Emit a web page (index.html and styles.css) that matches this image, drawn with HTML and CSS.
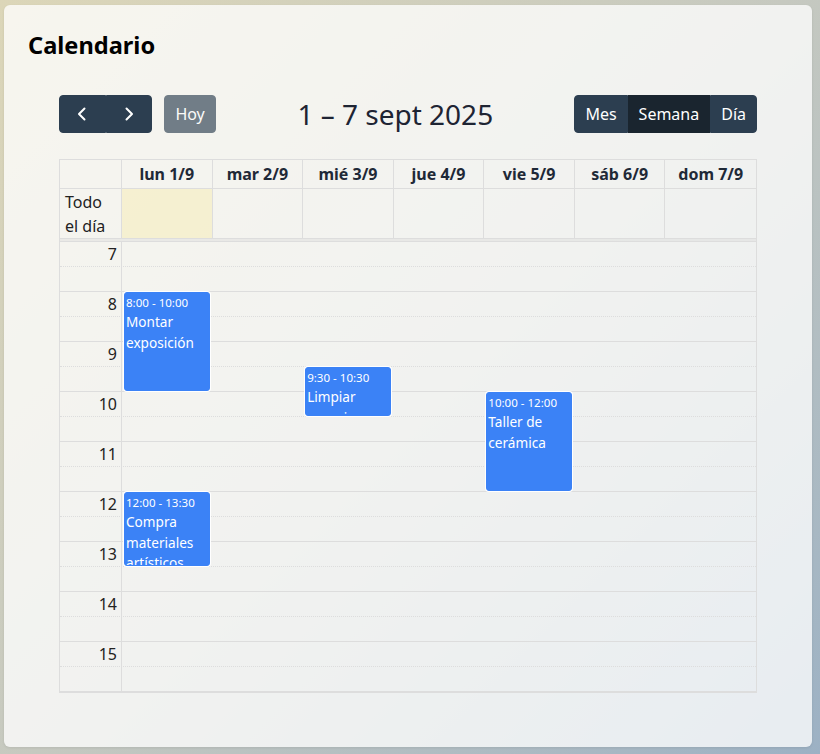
FILE: index.html
```html
<!DOCTYPE html>
<html lang="es">
<head>
<meta charset="utf-8">
<title>Calendario</title>
<link rel="stylesheet" href="styles.css">
</head>
<body>
<div class="card">
  <h2 class="page-title">Calendario</h2>
  <div class="cal">
    <div class="toolbar">
      <div class="chunk">
        <div class="btn-group">
          <button class="btn btn-icon" aria-label="Anterior"><svg width="16" height="16" viewBox="0 0 16 16"><path d="M10.5 2.5 L5 8 L10.5 13.5" fill="none" stroke="#fff" stroke-width="2" stroke-linecap="round" stroke-linejoin="round"/></svg></button>
          <button class="btn btn-icon" aria-label="Siguiente"><svg width="16" height="16" viewBox="0 0 16 16"><path d="M5.5 2.5 L11 8 L5.5 13.5" fill="none" stroke="#fff" stroke-width="2" stroke-linecap="round" stroke-linejoin="round"/></svg></button>
        </div>
        <button class="btn btn-disabled">Hoy</button>
      </div>
      <h2 class="cal-title">1 – 7 sept 2025</h2>
      <div class="btn-group">
        <button class="btn">Mes</button><button class="btn active">Semana</button><button class="btn">Día</button>
      </div>
    </div>

    <div class="grid">
      <div class="head">
        <div></div>
        <div>lun 1/9</div>
        <div>mar 2/9</div>
        <div>mié 3/9</div>
        <div>jue 4/9</div>
        <div>vie 5/9</div>
        <div>sáb 6/9</div>
        <div>dom 7/9</div>
      </div>
      <div class="allday">
        <div class="allday-label">Todo el día</div>
        <div class="today"></div>
        <div></div>
        <div></div>
        <div></div>
        <div></div>
        <div></div>
        <div></div>
      </div>
      <div class="divider"></div>
      <div class="body">
        <div class="slot"><div class="slot-label">7</div></div>
        <div class="slot half"><div class="slot-label"></div></div>
        <div class="slot"><div class="slot-label">8</div></div>
        <div class="slot half"><div class="slot-label"></div></div>
        <div class="slot"><div class="slot-label">9</div></div>
        <div class="slot half"><div class="slot-label"></div></div>
        <div class="slot"><div class="slot-label">10</div></div>
        <div class="slot half"><div class="slot-label"></div></div>
        <div class="slot"><div class="slot-label">11</div></div>
        <div class="slot half"><div class="slot-label"></div></div>
        <div class="slot"><div class="slot-label">12</div></div>
        <div class="slot half"><div class="slot-label"></div></div>
        <div class="slot"><div class="slot-label">13</div></div>
        <div class="slot half"><div class="slot-label"></div></div>
        <div class="slot"><div class="slot-label">14</div></div>
        <div class="slot half"><div class="slot-label"></div></div>
        <div class="slot"><div class="slot-label">15</div></div>
        <div class="slot half"><div class="slot-label"></div></div>

        <div class="cols">
          <div class="col axis"></div>
          <div class="col">
            <div class="event" style="top:50px;height:99px">
              <div class="ev-time">8:00 - 10:00</div>
              <div class="ev-title">Montar exposición</div>
            </div>
            <div class="event" style="top:250px;height:74px">
              <div class="ev-time">12:00 - 13:30</div>
              <div class="ev-title">Compra materiales artísticos</div>
            </div>
          </div>
          <div class="col"></div>
          <div class="col">
            <div class="event" style="top:125px;height:49px">
              <div class="ev-time">9:30 - 10:30</div>
              <div class="ev-title">Limpiar espacio</div>
            </div>
          </div>
          <div class="col"></div>
          <div class="col">
            <div class="event" style="top:150px;height:99px">
              <div class="ev-time">10:00 - 12:00</div>
              <div class="ev-title">Taller de cerámica</div>
            </div>
          </div>
          <div class="col"></div>
          <div class="col"></div>
        </div>
      </div>
    </div>
  </div>
</div>
</body>
</html>
```

FILE: styles.css
```css
* { box-sizing: border-box; }

html, body {
  margin: 0;
  height: 100%;
}

body {
  padding: 5px 8px 7px 4px;
  background: linear-gradient(135deg, #dcd6b8 0%, #c6c9c0 50%, #9cb1c4 100%);
  font-family: "Noto Sans", "Open Sans", sans-serif;
  font-size: 16px;
  line-height: 1.5;
  color: #222;
}

.card {
  height: 100%;
  padding: 24px;
  border-radius: 6px;
  background: rgba(255, 255, 255, 0.76);
  box-shadow: 0 1px 3px rgba(0, 0, 0, 0.08);
}

.page-title {
  margin: 0 0 34px;
  font-size: 23.6px;
  line-height: 32px;
  font-weight: 700;
  color: #000;
}

.cal {
  width: 698px;
  margin: 0 auto;
}

/* toolbar */
.toolbar {
  display: flex;
  justify-content: space-between;
  align-items: center;
  height: 38px;
  margin-bottom: 26px;
}

.chunk {
  display: flex;
  align-items: center;
}

.btn-group {
  display: flex;
}

.btn {
  font-family: inherit;
  font-size: 16px;
  line-height: 24px;
  height: 38px;
  padding: 6px 10px;
  border: 1px solid #2c3e50;
  background: #2c3e50;
  color: #fff;
  border-radius: 4px;
  cursor: pointer;
}

.btn-group .btn { border-radius: 0; }
.btn-group .btn:first-child { border-radius: 4px 0 0 4px; }
.btn-group .btn:last-child { border-radius: 0 4px 4px 0; }

.btn-icon {
  width: 46.5px;
  padding: 0;
  display: flex;
  align-items: center;
  justify-content: center;
}

.btn.active {
  background: #1a252f;
  border-color: #1a252f;
}

.btn-disabled {
  margin-left: 12px;
  padding: 6px 10.4px;
  opacity: 0.65;
}

.cal-title {
  margin: 0;
  font-size: 28px;
  line-height: 38px;
  font-weight: 400;
  color: #1e2433;
}

/* grid */
.grid {
  border: 1px solid #ddd;
}

.head,
.allday {
  display: grid;
  grid-template-columns: 62px repeat(7, 1fr);
  border-bottom: 1px solid #ddd;
}

.head > div {
  border-right: 1px solid #ddd;
  padding: 2px 4px;
  text-align: center;
  font-weight: 700;
  line-height: 24px;
  color: #1f2937;
}

.allday {
  height: 50px;
}

.allday > div {
  border-right: 1px solid #ddd;
}

.head > div:last-child,
.allday > div:last-child {
  border-right: 0;
}

.allday-label {
  padding: 1px 4px 0 5px;
  line-height: 24px;
}

.today {
  background: rgba(255, 220, 40, 0.15);
}

.divider {
  height: 3px;
  background: rgba(208, 208, 208, 0.3);
  border-bottom: 1px solid #ddd;
}

.body {
  position: relative;
}

.slot {
  height: 25px;
  display: grid;
  grid-template-columns: 62px 1fr;
  border-bottom: 1px dotted #ddd;
}

.slot.half {
  border-bottom-style: solid;
}

.slot-label {
  text-align: right;
  padding: 0 5px 0 4px;
  line-height: 24px;
}

.cols {
  position: absolute;
  inset: 0;
  display: grid;
  grid-template-columns: 62px repeat(7, 1fr);
}

.col {
  position: relative;
}

.col.axis {
  border-right: 1px solid #ddd;
}

.event {
  position: absolute;
  left: 2px;
  right: 3px;
  overflow: hidden;
  padding: 1px 1px 0;
  background: #3b82f6;
  border: 1px solid #3b82f6;
  border-radius: 3px;
  box-shadow: 0 0 0 1px #fff;
  color: #fff;
  font-size: 13.6px;
}

.ev-time {
  font-size: 11.56px;
  line-height: 17.3px;
  margin-bottom: 1px;
  white-space: nowrap;
}

.ev-title {
  line-height: 20.4px;
}
```
